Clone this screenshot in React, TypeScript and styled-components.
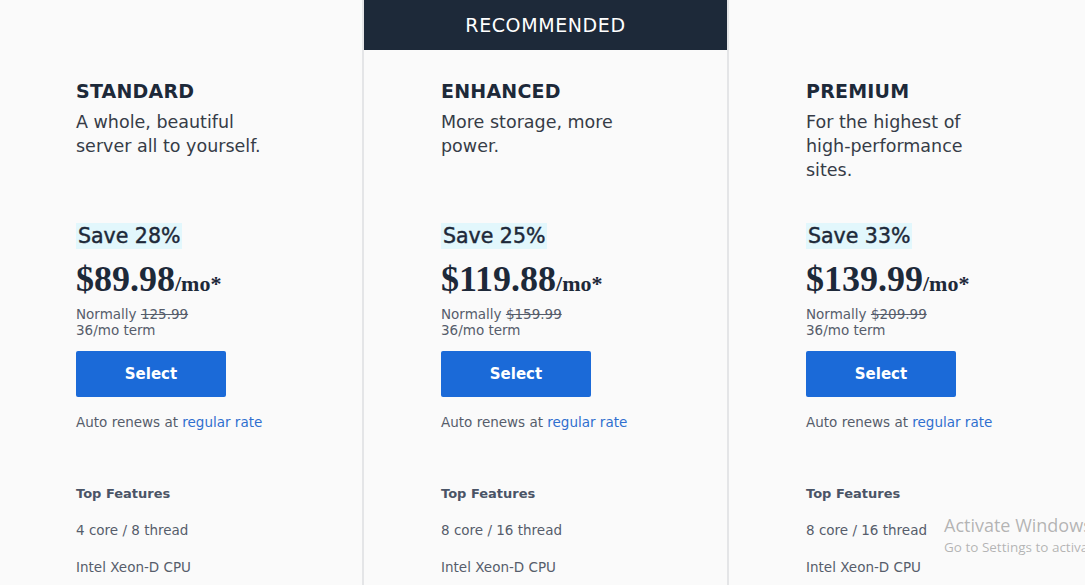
import React from "react";
import styled, { createGlobalStyle } from "styled-components";

const Global = createGlobalStyle`
  html, body { margin: 0; padding: 0; background: #fafafa; }
  body { font-family: "DejaVu Sans", "Open Sans", sans-serif; overflow: hidden; }
  * { box-sizing: border-box; }
`;

const Page = styled.div`
  position: relative;
  width: 1085px;
  height: 585px;
  overflow: hidden;
  background: #fafafa;
  display: grid;
  grid-template-columns: 362px 367px 1fr;
  align-items: stretch;
`;

const Column = styled.div<{ $featured?: boolean }>`
  display: flex;
  flex-direction: column;
  border-left: ${(p) => (p.$featured ? "2px solid #e4e5e7" : "none")};
  border-right: ${(p) => (p.$featured ? "2px solid #e4e5e7" : "none")};
`;

const Banner = styled.div<{ $show?: boolean }>`
  height: 50px;
  flex: none;
  background: ${(p) => (p.$show ? "#1d2939" : "transparent")};
  color: #ffffff;
  font-size: 19px;
  font-weight: 400;
  letter-spacing: 0.6px;
  display: flex;
  align-items: center;
  justify-content: center;
`;

const Body = styled.div<{ $pad: number }>`
  padding: 30px 0 0 ${(p) => p.$pad}px;
  display: flex;
  flex-direction: column;
  align-items: flex-start;
`;

const Title = styled.div`
  font-size: 19px;
  line-height: 22px;
  font-weight: 700;
  color: #1d2939;
  letter-spacing: 0.2px;
`;

const Desc = styled.div`
  margin-top: 8px;
  font-size: 17.5px;
  line-height: 24px;
  color: #363c47;
  width: 190px;
  min-height: 72px;
`;

const Save = styled.div`
  margin-top: 41px;
  background: #e2f7fc;
  color: #1d2939;
  font-size: 20.5px;
  font-weight: 400;
  -webkit-text-stroke: 0.45px #1d2939;
  line-height: 26px;
  padding: 0 2px;
`;

const Price = styled.div`
  margin-top: 12px;
  font-family: "Liberation Serif", "Times New Roman", serif;
  font-weight: 700;
  color: #1d2939;
  font-size: 36px;
  line-height: 36px;
  display: flex;
  align-items: baseline;
`;

const Per = styled.span`
  font-size: 22px;
`;

const Small = styled.div`
  font-size: 13.5px;
  line-height: 16px;
  color: #565d6b;
`;

const Normal = styled(Small)`
  margin-top: 4px;
`;

const Strike = styled.span`
  text-decoration: line-through;
`;

const SelectButton = styled.button`
  margin-top: 13px;
  width: 150px;
  height: 46px;
  border: none;
  border-radius: 2px;
  background: #1b6ad8;
  color: #ffffff;
  font-family: inherit;
  font-size: 15px;
  font-weight: 700;
  cursor: pointer;
`;

const Renew = styled.div`
  margin-top: 15px;
  font-size: 13.5px;
  line-height: 20px;
  color: #565d6b;
`;

const Link = styled.a`
  color: #2f6fcf;
  text-decoration: none;
`;

const FeatureHead = styled.div`
  margin-top: 52px;
  font-size: 13px;
  line-height: 20px;
  font-weight: 700;
  color: #4a5466;
`;

const Feature = styled.div<{ $gap: number }>`
  margin-top: ${(p) => p.$gap}px;
  font-size: 13.5px;
  line-height: 20px;
  color: #565d6b;
`;

const Watermark = styled.div`
  position: absolute;
  left: 944px;
  top: 513px;
  white-space: nowrap;
  font-family: "Open Sans", "Liberation Sans", sans-serif;
  color: rgba(120, 120, 120, 0.55);
`;

const WmTitle = styled.div`
  font-size: 18px;
  line-height: 24px;
`;

const WmSub = styled.div`
  font-size: 13.5px;
  line-height: 20px;
`;

type Plan = {
  name: string;
  desc: string;
  save: string;
  price: string;
  normal: string;
  cores: string;
  featured?: boolean;
  pad: number;
};

const plans: Plan[] = [
  { name: "STANDARD", desc: "A whole, beautiful server all to yourself.", save: "Save 28%", price: "$89.98", normal: "125.99", cores: "4 core / 8 thread", pad: 76 },
  { name: "ENHANCED", desc: "More storage, more power.", save: "Save 25%", price: "$119.88", normal: "$159.99", cores: "8 core / 16 thread", featured: true, pad: 77 },
  { name: "PREMIUM", desc: "For the highest of high-performance sites.", save: "Save 33%", price: "$139.99", normal: "$209.99", cores: "8 core / 16 thread", pad: 77 },
];

export default function App() {
  return (
    <>
      <Global />
      <Page>
        {plans.map((p) => (
          <Column key={p.name} $featured={p.featured}>
            <Banner $show={p.featured}>{p.featured ? "RECOMMENDED" : ""}</Banner>
            <Body $pad={p.pad}>
              <Title>{p.name}</Title>
              <Desc>{p.desc}</Desc>
              <Save>{p.save}</Save>
              <Price>
                {p.price}
                <Per>/mo*</Per>
              </Price>
              <Normal>
                Normally <Strike>{p.normal}</Strike>
              </Normal>
              <Small>36/mo term</Small>
              <SelectButton>Select</SelectButton>
              <Renew>
                Auto renews at <Link href="#">regular rate</Link>
              </Renew>
              <FeatureHead>Top Features</FeatureHead>
              <Feature $gap={16}>{p.cores}</Feature>
              <Feature $gap={17}>Intel Xeon-D CPU</Feature>
            </Body>
          </Column>
        ))}
        <Watermark>
          <WmTitle>Activate Windows</WmTitle>
          <WmSub>Go to Settings to activate Windows.</WmSub>
        </Watermark>
      </Page>
    </>
  );
}
